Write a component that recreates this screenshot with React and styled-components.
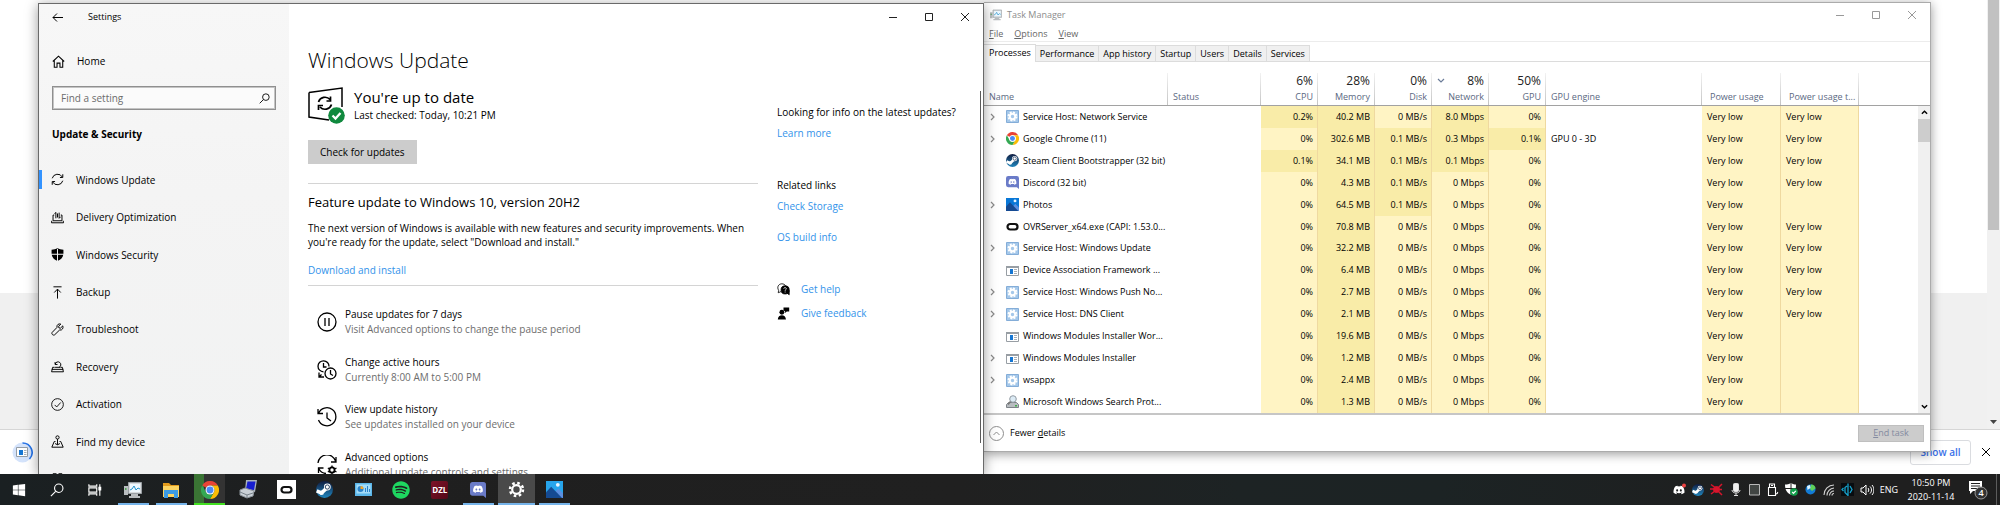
import styled, { createGlobalStyle } from 'styled-components';
import { FaWindows, FaDiscord, FaSpotify } from 'react-icons/fa';

// ── Global ─────────────────────────────────────────────────
const GlobalStyle = createGlobalStyle`
  * { box-sizing: border-box; margin: 0; padding: 0; }
  body {
    font-family: 'Open Sans', 'Noto Sans', sans-serif;
    font-size: 10px;
    line-height: 14px;
    color: #000;
    overflow: hidden;
  }
  button, input { font: inherit; color: inherit; border: 0; background: none; }
  a { color: #3393ea; text-decoration: none; }
  ul { list-style: none; }
  svg { display: block; flex: none; }
`;

const Desktop = styled.div`
  position: relative;
  display: flex;
  flex-direction: column;
  height: 100vh;
  background: #fff;
  overflow: hidden;
`;

// ── Browser behind the windows ─────────────────────────────
const Browser = styled.div`
  flex: 1;
  display: flex;
  flex-direction: column;
`;

const BrowserPage = styled.div`
  flex: 1;
  display: flex;
  background: #f0f0f0;
`;

const BrowserSheet = styled.div`
  flex: 1;
  height: 293px;
  background: #fff;
`;

const BrowserScroll = styled.div`
  width: 13px;
  padding: 0 1px 4px;
  display: flex;
  flex-direction: column;
  justify-content: space-between;
  align-items: center;
  background: #f1f1f1;
`;

const BrowserThumb = styled.div`
  width: 11px;
  height: 230px;
  background: #c1c1c1;
`;

const DownloadBar = styled.div`
  height: 45px;
  padding: 0 9px 0 12px;
  display: flex;
  align-items: center;
  gap: 10px;
  border-top: 1px solid #d6d6d6;
`;

const ShowAll = styled.button`
  width: 61px;
  height: 25px;
  margin-left: auto;
  border: 1px solid #dadce0;
  border-radius: 3px;
  font-weight: 600;
  color: #3b71e8;
`;

const PlainButton = styled.button`
  display: flex;
  align-items: center;
  justify-content: center;
`;

// ── Window layer ───────────────────────────────────────────
const Windows = styled.div`
  position: absolute;
  inset: 0 0 31px;
  display: grid;
  grid-template-columns: minmax(0, 946fr) minmax(0, 947fr);
  align-items: start;
  padding: 2px 69px 0 38px;
  overflow: hidden;
`;

const SettingsWindow = styled.section`
  position: relative;
  z-index: 1;
  display: flex;
  height: calc(100vh - 34px);
  margin-top: 1px;
  border: 1px solid #6a6a6a;
  border-bottom: 0;
  background: #fff;
  box-shadow: 0 2px 12px rgba(0, 0, 0, 0.4);
  overflow: hidden;
`;

const Sidebar = styled.aside`
  width: 250px;
  flex: none;
  padding: 0 13px;
  background: linear-gradient(#f7f7f7, #f4f4f4 40%, #f1f2f2);
`;

const SettingsTitle = styled.header`
  display: flex;
  align-items: center;
  gap: 25px;
  height: 26px;
  font-size: 9px;
`;

const HomeLink = styled.a`
  display: flex;
  align-items: center;
  gap: 12px;
  height: 26px;
  margin-top: 18px;
  color: #000;
`;

const SearchBox = styled.label`
  display: flex;
  align-items: center;
  height: 24px;
  margin: 12px 0 14px;
  padding: 0 5px 0 8px;
  border: 1px solid #8f8f8f;
  outline: 1px solid #c4c4c4;
  outline-offset: -2px;
  background: #fbfbfb;
`;

const SearchInput = styled.input`
  flex: 1;
  min-width: 0;
  outline: 0;
  &::placeholder { color: #6c6c6c; opacity: 1; }
`;

const SideHeading = styled.h2`
  font-size: 10px;
  line-height: 20px;
  font-weight: 700;
`;

const Nav = styled.nav`
  display: grid;
  grid-auto-rows: 1fr;
  height: 337px;
  margin: 17px -13px 0;
`;

const NavItem = styled.a`
  display: flex;
  align-items: center;
  gap: 12px;
  padding-left: 12px;
  color: #000;
  background: ${(p) =>
    p.$active ? 'linear-gradient(#3393ff, #3393ff) 0 center / 3px 19px no-repeat' : 'none'};
`;

const Content = styled.div`
  flex: 1;
  min-width: 0;
  display: flex;
  flex-direction: column;
`;

const WindowButtons = styled.div`
  display: flex;
  flex: none;
  justify-content: flex-end;
  height: ${(p) => p.$height};
  margin-left: auto;
  color: ${(p) => p.$color};
`;

const WindowButton = styled(PlainButton)`
  width: 36px;
`;

const ContentBody = styled.div`
  display: grid;
  grid-template-columns: minmax(0, 450px) minmax(0, 1fr);
  gap: 19px;
  padding: 0 12px 0 19px;
`;

const Main = styled.main`
  padding-top: 16px;
`;

const PageTitle = styled.h1`
  font-size: 21px;
  line-height: 28px;
  font-weight: 300;
`;

const StatusRow = styled.div`
  display: flex;
  gap: 9px;
  margin-top: 13px;
`;

const StatusTitle = styled.h2`
  font-size: 15px;
  line-height: 21px;
  font-weight: 400;
`;

const CheckButton = styled.button`
  height: 24px;
  margin-top: 16px;
  padding: 0 12px;
  background: #ccc;
`;

const Divider = styled.hr`
  border: 0;
  border-top: 1px solid #d4d4d4;
  margin-top: ${(p) => p.$top};
`;

const FeatureTitle = styled.h3`
  margin: 8px 0 9px;
  font-size: 13px;
  line-height: 20px;
  font-weight: 400;
`;

const InstallLink = styled.a`
  display: block;
  margin-top: 14px;
`;

const Options = styled.ul`
  display: grid;
  grid-auto-rows: 1fr;
  height: 191px;
  margin: 12px 0 0 9px;
`;

const Option = styled.li`
  display: flex;
  align-items: center;
  gap: 8px;
  line-height: 15px;
`;

const OptionHint = styled.p`
  color: #6d6d6d;
`;

const Links = styled.div`
  padding-top: 75px;
  display: flex;
  flex-direction: column;
  align-items: flex-start;
  white-space: nowrap;
`;

const LinkGroup = styled.div`
  display: flex;
  flex-direction: column;
  gap: ${(p) => p.$gap};
  margin-bottom: ${(p) => p.$after};
`;

const IconLink = styled.a`
  display: flex;
  align-items: center;
  gap: 11px;
  svg { color: #000; }
`;

const ScrollMark = styled.div`
  position: absolute;
  top: 87px;
  right: 2px;
  bottom: 31px;
  width: 1px;
  background: #5a5a5a;
`;

// ── Task manager ───────────────────────────────────────────
const TaskWindow = styled.section`
  border: 1px solid #ababab;
  border-left: 0;
  background: #fff;
  font-size: 9px;
  box-shadow: 0 2px 10px rgba(0, 0, 0, 0.4);
`;

const TaskTitle = styled.header`
  display: flex;
  align-items: center;
  gap: 5px;
  height: 24px;
  padding-left: 6px;
  color: #8c8c8c;
`;

const Menu = styled.div`
  display: flex;
  gap: 11px;
  height: 15px;
  padding-left: 5px;
  border-bottom: 1px solid #ececec;
  color: #666;
`;

const Tabs = styled.div`
  display: flex;
  align-items: flex-end;
  height: 20px;
  border-bottom: 1px solid #dcdcdc;
`;

const Tab = styled.button`
  height: ${(p) => (p.$active ? '18px' : '16px')};
  padding: ${(p) => (p.$active ? '0 4px 2px 5px' : '0 4px')};
  border: solid #dcdcdc;
  border-width: 1px 1px 0 0;
  background: ${(p) => (p.$active ? '#fff' : '#f0f0f0')};
  margin-bottom: ${(p) => (p.$active ? '-1px' : '0')};
`;

const TableArea = styled.div`
  display: flex;
  border-bottom: 2px solid #c6c6c6;
`;

const Table = styled.table`
  flex: 1;
  width: 100%;
  min-width: 0;
  height: 351px;
  table-layout: fixed;
  border-collapse: separate;
  border-spacing: 0;
  white-space: nowrap;
`;

const Col = styled.col`
  width: ${(p) => p.$width};
`;

const HeadCell = styled.th`
  height: 44px;
  padding: 0 5px 0 ${(p) => (p.$inset ? '8px' : '5px')};
  border-bottom: 1px solid #a2a2a2;
  background: ${(p) =>
    p.$line ? 'linear-gradient(#f2f2f2, #c4c4c4) right bottom / 1px 32px no-repeat' : 'none'};
  color: #5a6882;
  font-weight: 400;
  line-height: 16px;
  text-align: ${(p) => (p.$num ? 'right' : 'left')};
  vertical-align: bottom;
`;

const Total = styled.div`
  display: flex;
  justify-content: flex-end;
  align-items: center;
  font-size: 12px;
  color: #222;
  svg { margin-right: auto; color: #6b7c99; }
`;

const Cell = styled.td`
  padding: 0 4px 0 5px;
  overflow: hidden;
  line-height: 14px;
  text-align: ${(p) => (p.$num ? 'right' : 'left')};
  background: ${(p) => ({ low: '#fff4c4', mid: '#f9eca8' })[p.$heat] || 'none'};
  border-right: ${(p) => (p.$heat ? '1px solid #efd9a0' : '0')};
`;

const NameBox = styled.div`
  display: flex;
  align-items: center;
  gap: 4px;
`;

const Expander = styled.span`
  flex: none;
  width: 13px;
  height: 8px;
  color: #8a8a8a;
`;

const TableScroll = styled.div`
  width: 12px;
  flex: none;
  display: flex;
  flex-direction: column;
  align-items: center;
  background: #f0f0f0;
`;

const ScrollHead = styled.div`
  width: 12px;
  height: 44px;
  border-bottom: 1px solid #a2a2a2;
  background: #fff;
`;

const ScrollThumb = styled.div`
  width: 12px;
  height: 23px;
  margin-bottom: auto;
  background: #cdcdcd;
`;

const ScrollArrow = styled(PlainButton)`
  height: 13px;
`;

const TaskFooter = styled.footer`
  display: flex;
  align-items: center;
  justify-content: space-between;
  height: 36px;
  padding: 0 6px 0 5px;
`;

const FewerButton = styled(PlainButton)`
  gap: 6px;
`;

const EndButton = styled.button`
  width: 66px;
  height: 17px;
  border: 1px solid #bfbfbf;
  background: #ccc;
  color: #838aa0;
`;

// ── Taskbar ────────────────────────────────────────────────
const Taskbar = styled.footer`
  display: flex;
  height: 31px;
  background: linear-gradient(90deg, #1a2022, #1f1f1f 18%, #202020 48%, #1d2324 62%, #1c2324 72%, #1f1f1f 90%);
  color: #fff;
`;

const SystemApps = styled.div`
  display: grid;
  grid-template-columns: repeat(3, 38px);
`;

const PinnedApps = styled.div`
  display: grid;
  grid-template-columns: repeat(12, 1fr);
  width: 460px;
`;

const stateFill = {
  active: '#4a4a4a',
  progress: 'linear-gradient(90deg, #3a7434 10px, #333 10px)',
};

const AppButton = styled(PlainButton)`
  justify-self: center;
  width: ${(p) => (p.$state === 'active' ? '37px' : '31px')};
  background: ${(p) => stateFill[p.$state] || 'none'};
  box-shadow: ${(p) =>
    p.$state ? `inset 0 -2px ${p.$state === 'progress' ? '#42e020' : '#76b4ea'}` : 'none'};
`;

const OculusTile = styled.span`
  display: flex;
  align-items: center;
  justify-content: center;
  width: 19px;
  height: 19px;
  background: #fff;
`;

const DzlTile = styled.span`
  width: 17px;
  height: 18px;
  border-radius: 2px;
  background: linear-gradient(135deg, #7d1228, #540818);
  font-size: 8px;
  line-height: 18px;
  font-weight: 700;
`;

const Tray = styled.div`
  display: flex;
  align-items: center;
  margin-left: auto;
  font-size: 9px;
`;

const TrayIcons = styled.div`
  display: grid;
  grid-template-columns: repeat(11, 1fr);
  justify-items: center;
  align-items: center;
  width: 206px;
`;

const Language = styled.button`
  width: 26px;
`;

const Clock = styled.time`
  width: 58px;
  text-align: center;
`;

const Notices = styled(PlainButton)`
  width: 36px;
`;

const ShowDesktop = styled.div`
  width: 4px;
  height: 31px;
  border-left: 1px solid #5c5c5c;
`;

// ── Icons ──────────────────────────────────────────────────
const Line = ({ size = 13, w = 1, vb = 16, children }) => (
  <svg width={size} height={size} viewBox={`0 0 ${vb} ${vb}`} fill="none" stroke="currentColor" strokeWidth={w}>
    {children}
  </svg>
);

const MinIcon = () => <Line size={10} vb={10}><path d="M1 5.500h8" /></Line>;
const MaxIcon = () => <Line size={10} vb={10}><path d="M1.500 1.500h7v7h-7z" /></Line>;
const CloseIcon = () => <Line size={10} vb={10}><path d="M1 1l8 8M9 1L1 9" /></Line>;
const BackIcon = () => <Line size={11} vb={11}><path d="M1 5.500h10M5 1.500l-4 4 4 4" /></Line>;
const HomeIcon = () => (
  <Line w={1.3}><path d="M1 8l7-6.500 7 6.500M2.800 6.500V15h3.400v-5h3.600v5h3.400V6.500" /></Line>
);
const SearchIcon = ({ size = 11 }) => (
  <Line size={size} w={1.3}><circle cx="10" cy="6" r="4.800" /><path d="M6.500 9.500L1 15" /></Line>
);
const SyncIcon = () => (
  <Line w={1.2}>
    <path d="M1.500 6.500A6.800 6.800 0 0 1 14 5M14.500 1.500v4H11M14.500 9.500A6.800 6.800 0 0 1 2 11M1.500 14.500v-4H5" />
  </Line>
);
const DeliveryIcon = () => (
  <Line w={1.2}><path d="M4 5H2.500v7h11V5H12M1 12l-.4 2.500h14.800L15 12M6 9V2M4.500 3.500L6 1.500M10 2v7M8 3v5M10 9l2-2" /></Line>
);
const ShieldIcon = () => (
  <Line w={0}>
    <path fill="currentColor" d="M8 0c2 1.500 4.500 2 7.300 2v5H8.600V1H7.400v6H.7V2C3.500 2 6 1.500 8 0zM.9 8.200h6.500v7.500C4 14 1.500 12 .9 8.200zM8.600 8.200h6.500C14.500 12 12 14 8.600 15.700z" />
  </Line>
);
const BackupIcon = () => <Line w={1.2}><path d="M3 1h10M8 15.500V4M4 8l4-4.200L12 8" /></Line>;
const WrenchIcon = () => (
  <Line w={1.2}><path d="M14.500 3.500l-2.800 2.800-2-.3-.3-2 2.700-2.700C9.500.5 6.800 2 7.300 5.500L1.500 11.500c-1.500 1.500 1 4.500 3 3L10.500 8.700c3.500.6 5-2.500 4-5.200z" /></Line>
);
const RecoveryIcon = () => (
  <Line w={1.2}><path d="M4.500 9H2L.7 14.500h14.600L14 9h-2.500M5 9h6M5 2.500v3h3M5.200 5A3.500 3.500 0 1 1 10 9M1 11.500h14" /></Line>
);
const ActivationIcon = () => <Line w={1.1}><circle cx="8" cy="8" r="7.200" /><path d="M4.500 8.500L7 11l5-5.500" /></Line>;
const FindIcon = () => (
  <Line w={1.2}><circle cx="8" cy="3" r="2" /><path d="M8 5v7M5.500 8H4L1 15h14l-3-7h-1.500M5 10.500l3 1.500 3-1.500" /></Line>
);
const DeveloperIcon = () => <Line w={1.5}><path d="M3 15V1h3v4M13 15V1h-3v4M3 8h10" /></Line>;

const UpdateStatusIcon = () => (
  <svg width="37" height="37" viewBox="0 0 37 37" fill="none" stroke="#000">
    <path strokeWidth="1.500" d="M1 5.500L34 1v19M1 5.500V30l20 3" />
    <g transform="translate(9 8.500)" strokeWidth="1.700">
      <path d="M1.500 6.500A6.800 6.800 0 0 1 13 4M13.500 1v4.500H9.500M14.500 9A6.800 6.800 0 0 1 3 11.500M1.500 14.500v-4.500H6" />
    </g>
    <circle cx="28.500" cy="28.500" r="8.300" fill="#10893e" stroke="none" />
    <path stroke="#fff" strokeWidth="2.300" d="M24.500 28.500l3 3 5-5.500" />
  </svg>
);
const PauseIcon = () => <Line size={20} vb={20} w={1.3}><circle cx="10" cy="10" r="9" /><path d="M8 6v8M12 6v8" /></Line>;
const HoursIcon = () => (
  <Line size={20} vb={20} w={1.3}>
    <circle cx="13.500" cy="13.500" r="5.500" />
    <path d="M13.500 10v4l2.500 1.500M6.500 11.800A5.500 5.500 0 1 1 12 6.500M6.500 3v4h3M2 12.500v4.500h5M4.500 14.500L2 17" />
  </Line>
);
const HistoryIcon = () => (
  <Line size={20} vb={20} w={1.3}><path d="M1.500 6.500A9 9 0 1 1 1.500 13M1 2v4.500h5M10 5.500V11l4 3" /></Line>
);
const AdvancedIcon = () => (
  <Line size={20} vb={20} w={1.3}>
    <path d="M1 8A9 9 0 0 1 18.500 6M19 2v5h-5M9 18.500A8.500 8.500 0 0 1 2 14M1.500 18v-5h5" />
    <circle cx="15" cy="15" r="2.600" strokeWidth="1.800" />
    <path d="M15 10.500v2M15 17.500v2M10.800 13l2 1M17.500 16l2 1M10.800 17l2-1M17.500 14l2-1" />
  </Line>
);
const HelpIcon = () => (
  <Line size={13}>
    <path d="M5 10.500L1.500 12 2 9C-.5 5 2 1 6 1c2 0 4 1 4.500 2.500" />
    <circle cx="10" cy="8.500" r="5" fill="currentColor" /><path fill="currentColor" d="M12 12l3 2.500V9" />
    <path stroke="#fff" d="M8.300 7c.3-2 3.500-1.500 3.200.3-.2 1-1.500.8-1.500 2.200M10 10.500v1.200" />
  </Line>
);
const FeedbackIcon = () => (
  <Line size={13} w={0}>
    <g fill="currentColor"><circle cx="6" cy="6.500" r="3" /><path d="M1 15.500c0-7 10-7 10 0zM8 .5h7v5h-3L10 7.500V5.500L8 4z" /></g>
  </Line>
);

const Chrome = ({ size }) => (
  <svg width={size} height={size} viewBox="0 0 24 24">
    <path fill="#e94335" d="M1.600 6A12 12 0 0 1 22.400 6H12a6 6 0 0 0-5.200 3z" />
    <path fill="#fbbc05" d="M22.400 6A12 12 0 0 1 12 24l5.200-9A6 6 0 0 0 12 6z" />
    <path fill="#34a853" d="M12 24A12 12 0 0 1 1.600 6l5.200 9a6 6 0 0 0 10.400 0z" />
    <circle cx="12" cy="12" r="6" fill="#fff" /><circle cx="12" cy="12" r="4.600" fill="#4a8af4" />
  </svg>
);
const Steam = ({ size }) => (
  <svg width={size} height={size} viewBox="0 0 24 24">
    <linearGradient id="steam" x2="0" y2="1"><stop stopColor="#101c40" /><stop offset="1" stopColor="#2086bd" /></linearGradient>
    <circle cx="12" cy="12" r="12" fill="url(#steam)" />
    <path stroke="#fff" strokeWidth="5" d="M1 14l7 3M9 16l7-7" /><circle cx="16" cy="8.500" r="4.800" fill="#fff" />
    <circle cx="16" cy="8.500" r="3" fill="none" stroke="#1a3155" strokeWidth="1.300" /><circle cx="8" cy="16.500" r="3.200" fill="#fff" />
  </svg>
);
const DiscordTile = ({ size }) => (
  <svg width={size} height={size} viewBox="0 0 18 18">
    <path fill="#6a7bc8" d="M3 0h12a3 3 0 0 1 3 3v15l-3-2.500H3a3 3 0 0 1-3-3V3a3 3 0 0 1 3-3z" />
    <FaDiscord x="3" y="2" size={12} color="#fff" />
  </svg>
);
const ServiceIcon = () => (
  <svg width="13" height="13" viewBox="0 0 13 13">
    <path fill="#a5c8ea" stroke="#84add8" d="M.5.5h12v12H.5z" />
    <circle cx="6.500" cy="6.500" r="4" fill="none" stroke="#fff" strokeWidth="2" strokeDasharray="1.900 1.240" />
    <circle cx="6.500" cy="6.500" r="2.700" fill="none" stroke="#fff" strokeWidth="2" />
  </svg>
);
const ExeIcon = () => (
  <svg width="13" height="13" viewBox="0 0 13 13">
    <path fill="#fff" stroke="#989ea4" d="M.5 2.500h12v9H.5z" /><path fill="#989ea4" d="M0 2h13v2H0z" />
    <path fill="#1676d2" d="M4 5h3v5H4z" /><path stroke="#a9b0b8" d="M8 5.500h3M8 7.500h3M8 9.500h3" />
  </svg>
);
const PhotosIcon = ({ size }) => (
  <svg width={size} height={size} viewBox="0 0 18 18">
    <path fill={size > 14 ? '#27a5ec' : '#0877d7'} d="M0 0h18v18H0z" />
    <path fill="#5b8fe0" d="M9 12l4-4 5 5v5H9z" /><path fill="#154a92" d="M0 12l5.500-6L17 18H0z" /><circle cx="12.500" cy="4" r="2" fill="#eaf6ff" />
  </svg>
);
const OculusIcon = () => (
  <svg width="13" height="13" viewBox="0 0 13 13"><rect x="1.500" y="4" width="10" height="5.500" rx="2.700" fill="none" stroke="#111" strokeWidth="2.200" /></svg>
);
const SearchHostIcon = () => (
  <svg width="13" height="13" viewBox="0 0 13 13">
    <path fill="#b8bcc0" stroke="#7d8388" d="M2.500 7.500h8l2 2v3H.5v-3z" /><circle cx="7" cy="4" r="3.300" fill="#dcebf5" stroke="#929aa2" />
    <path stroke="#777" strokeWidth="1.500" d="M4.500 6.500L2 9.500" /><path fill="#3fae49" d="M9 10h2v1.500H9z" />
  </svg>
);
const TaskMgrIcon = ({ size }) => (
  <svg width={size} height={size} viewBox="0 0 18 18">
    <path fill="#d6dadd" stroke="#9aa0a5" d="M4.500 1.500h13v11h-13z" /><path fill="#eef8fe" d="M6 3h10v8H6z" />
    <path fill="none" stroke="#2492cc" d="M6 9l2-1 2-3 2 4 2-2 2 1" /><path fill="#b9bdc0" d="M0 5h4v9H0zM7 13h7v2h2v2H5v-2h2z" /><path fill="#53a657" d="M1 7h1.500v2H1z" />
  </svg>
);
const FolderIcon = () => (
  <svg width="18" height="18" viewBox="0 0 18 18">
    <path fill="#e39b1c" d="M1 2h6l2 2h8v12H1z" /><path fill="#fcd462" d="M1 5h16v11H1z" /><path fill="#3d9be3" d="M2 9h14v8h-4v-4H6v4H2z" />
  </svg>
);
const PcIcon = () => (
  <svg width="19" height="19" viewBox="0 0 19 19">
    <path fill="#aab3bc" d="M7 0h11l-2 12-10-1z" /><path fill="#171ed0" d="M8.500 1.500h8l-1.500 8.500-8-1z" />
    <path fill="#c9d0d6" stroke="#8a9299" d="M1 10l5-2 9 3-1 5-6 2-7-3z" /><path fill="none" stroke="#78828a" d="M1 12l7 3 6-2M8 15v3" />
  </svg>
);
const PanelIcon = () => (
  <svg width="17" height="13" viewBox="0 0 17 13">
    <path fill="#5cb7ea" d="M0 0h17v13H0z" /><path fill="#a5dcf8" d="M1.500 1.500h14v9h-14z" />
    <circle cx="5.500" cy="6" r="3" fill="#2b82c9" /><path fill="#f4a72c" d="M5.500 6V3a3 3 0 0 1 3 3z" /><path stroke="#2b82c9" d="M10.500 9V5M12.500 9V3M14.500 9V6" />
  </svg>
);
const TaskViewIcon = () => (
  <Line size={14} w={1.3}><path d="M1 1.500v2h9v-2M1 14.500v-2h9v2M1 5.500h9v5H1zM13.500 1.500v13M12.500 5h2v3h-2z" /></Line>
);
const GearIcon = () => (
  <svg width="17" height="17" viewBox="0 0 17 17" fill="none" stroke="#fff">
    <circle cx="8.500" cy="8.500" r="4.300" strokeWidth="2.200" /><circle cx="8.500" cy="8.500" r="6.500" strokeWidth="2.500" strokeDasharray="2.550 2.550" />
  </svg>
);
const DownloadIcon = () => (
  <svg width="21" height="21" viewBox="0 0 21 21">
    <circle cx="10.500" cy="10.500" r="10" fill="#d4e3fb" /><path fill="none" stroke="#2673e8" strokeWidth="1.600" d="M10.500 1a9.500 9.500 0 0 1 7 16" />
    <path fill="#fff" stroke="#959da5" d="M4.500 5.500h11v9h-11z" /><path fill="#1676d2" d="M7 8h4v5H7z" /><path stroke="#a9b0b8" d="M12 8.500h2.500M12 10.500h2.500M12 12.500h2.500" />
  </svg>
);
const Chevron = ({ d, size = 8, w = 1.2 }) => <Line size={size} vb={8} w={w}><path d={d} /></Line>;

// ── Tray icons ─────────────────────────────────────────────
const TrayDiscord = () => (
  <svg width="13" height="13" viewBox="0 0 13 13"><FaDiscord x="0" y="1" size={12} color="#fff" /><circle cx="11" cy="2.500" r="2" fill="#ee4343" /></svg>
);
const TrayRed = () => (
  <svg width="13" height="13" viewBox="0 0 13 13" stroke="#d8152c" fill="#d8152c">
    <circle cx="6.500" cy="6.500" r="3" /><path strokeWidth="1.500" d="M1 1.500l4 3M12 1l-4 4M1 11l4-3M12 12L8 8M0 6h4M9 6.500h3" />
  </svg>
);
const TrayMic = () => (
  <svg width="12" height="13" viewBox="0 0 12 13" stroke="#ddd" fill="none"><rect x="3.500" y=".5" width="5" height="8" rx="1" fill="#eee" /><path d="M2 7c0 4 8 4 8 0M6 10v3M4 12.500h4" /></svg>
);
const TrayBox = () => (
  <svg width="11" height="12" viewBox="0 0 11 12"><path fill="#414543" stroke="#b8b8b8" d="M.5.5h10v10.500H.5z" /></svg>
);
const TrayUsb = () => <Line size={13} vb={13} w={1.1}><path d="M3.500 4V1h5v3M2.500 4.500h7v8h-7zM5 2.500h2M10 11c1 0 2-1 1.500-2" /></Line>;
const TrayShield = () => (
  <svg width="13" height="13" viewBox="0 0 13 13">
    <path fill="#fff" d="M6 0c2 1.500 3.500 1.500 5 1.500 0 6-1 8-5 10.500C2 9.500 0 7.500 0 1.500 2 1.500 4 1.500 6 0z" /><path stroke="#202020" d="M6 0v12M0 5.500h12" />
    <circle cx="9" cy="9" r="3.800" fill="#13a04b" /><path fill="none" stroke="#fff" strokeWidth="1.200" d="M7.200 9l1.300 1.300 2.300-2.500" />
  </svg>
);
const TrayBall = () => (
  <svg width="11" height="11" viewBox="0 0 11 11"><circle cx="5.500" cy="5.500" r="5" fill="#137bd4" /><path fill="#5dd15a" d="M6 .5c3 0 4.500 2 4.500 4L7 7 5 5z" /><path fill="#dff5ff" d="M2 2l3-1 .5 3-3 2z" /></svg>
);
const TrayWifi = () => (
  <Line size={12} vb={12} w={1.1}>
    <path opacity=".8" d="M1 11A10 10 0 0 1 11 1M4 11.500A7.500 7.500 0 0 1 11 4M6.500 11.500A4.500 4.500 0 0 1 11 7M9 11.500A2 2 0 0 1 11 9.500" />
  </Line>
);
const TrayDiamond = () => (
  <svg width="13" height="13" viewBox="0 0 13 13"><path fill="#080c10" d="M0 0h13v13H0z" /><path fill="none" stroke="#16a3ce" strokeWidth="1.300" d="M7 .5v12L4 9.500v-5L6 3M9 3l2 3.500L9 10M2.500 5L1 6.500 2.500 8" /></svg>
);
const TrayVolume = () => <Line size={14} vb={14}><path d="M1 5h2l3-3v10L3 9H1zM8 5c1 1 1 3 0 4M10 3.500c2 2 2 5 0 7M12 2c2.500 3 2.500 7 0 10" /></Line>;
const NoticeIcon = () => (
  <svg width="20" height="20" viewBox="0 0 20 20">
    <path fill="#fff" d="M1 1h13v10H5l-3 3v-3H1z" /><path stroke="#222" d="M3 3.500h9M3 6h9M3 8.500h6" />
    <circle cx="13" cy="13" r="6" fill="#333" stroke="#999" />
    <text x="13" y="16" textAnchor="middle" fontSize="9" fontWeight="600" fill="#fff">4</text>
  </svg>
);

// ── Data ───────────────────────────────────────────────────
const navItems = [
  ['Windows Update', SyncIcon],
  ['Delivery Optimization', DeliveryIcon],
  ['Windows Security', ShieldIcon],
  ['Backup', BackupIcon],
  ['Troubleshoot', WrenchIcon],
  ['Recovery', RecoveryIcon],
  ['Activation', ActivationIcon],
  ['Find my device', FindIcon],
];

const options = [
  ['Pause updates for 7 days', 'Visit Advanced options to change the pause period', PauseIcon],
  ['Change active hours', 'Currently 8:00 AM to 5:00 PM', HoursIcon],
  ['View update history', 'See updates installed on your device', HistoryIcon],
  ['Advanced options', 'Additional update controls and settings', AdvancedIcon],
];

const tabs = ['Processes', 'Performance', 'App history', 'Startup', 'Users', 'Details', 'Services'];

const colWidths = ['184px', '93px', '57px', '57px', '57px', '57px', '57px', '156px', '79px', '78px', 'auto'];

const low = 'Very low';
const processes = [
  { name: 'Service Host: Network Service', icon: <ServiceIcon />, open: true, cpu: '0.2%', mem: '40.2', net: '8.0', trend: low },
  { name: 'Google Chrome (11)', icon: <Chrome size={13} />, open: true, mem: '302.6', disk: '0.1', net: '0.3', gpu: '0.1%', engine: 'GPU 0 - 3D', trend: low },
  { name: 'Steam Client Bootstrapper (32 bit)', icon: <Steam size={13} />, cpu: '0.1%', mem: '34.1', disk: '0.1', net: '0.1', trend: low },
  { name: 'Discord (32 bit)', icon: <DiscordTile size={13} />, mem: '4.3', disk: '0.1', trend: low },
  { name: 'Photos', icon: <PhotosIcon size={13} />, open: true, mem: '64.5', disk: '0.1' },
  { name: 'OVRServer_x64.exe (CAPI: 1.53.0...', icon: <OculusIcon />, mem: '70.8', trend: low },
  { name: 'Service Host: Windows Update', icon: <ServiceIcon />, open: true, mem: '32.2', trend: low },
  { name: 'Device Association Framework ...', icon: <ExeIcon />, mem: '6.4', trend: low },
  { name: 'Service Host: Windows Push No...', icon: <ServiceIcon />, open: true, mem: '2.7', trend: low },
  { name: 'Service Host: DNS Client', icon: <ServiceIcon />, open: true, mem: '2.1', trend: low },
  { name: 'Windows Modules Installer Wor...', icon: <ExeIcon />, mem: '19.6' },
  { name: 'Windows Modules Installer', icon: <ExeIcon />, open: true, mem: '1.2' },
  { name: 'wsappx', icon: <ServiceIcon />, open: true, mem: '2.4' },
  { name: 'Microsoft Windows Search Prot...', icon: <SearchHostIcon />, mem: '1.3' },
];

const totals = [['6%', 'CPU'], ['28%', 'Memory'], ['0%', 'Disk'], ['8%', 'Network'], ['50%', 'GPU']];

const apps = [
  ['Task Manager', <TaskMgrIcon size={18} />, 'open'],
  ['File Explorer', <FolderIcon />, 'open'],
  ['Google Chrome', <Chrome size={18} />, 'progress'],
  ['Remote PC', <PcIcon />],
  ['Oculus', <OculusTile><OculusIcon /></OculusTile>],
  ['Steam', <Steam size={17} />],
  ['Control Panel', <PanelIcon />],
  ['Spotify', <FaSpotify size={18} color="#1ed760" />],
  ['DZL', <DzlTile>DZL</DzlTile>],
  ['Discord', <DiscordTile size={16} />, 'open'],
  ['Settings', <GearIcon />, 'active'],
  ['Photos', <PhotosIcon size={17} />, 'open'],
];

const heat = (value) => (parseFloat(value) > 0 ? 'mid' : 'low');

// ── Components ─────────────────────────────────────────────
function WindowControls({ height, color }) {
  return (
    <WindowButtons $height={height} $color={color}>
      <WindowButton aria-label="Minimize"><MinIcon /></WindowButton>
      <WindowButton aria-label="Maximize"><MaxIcon /></WindowButton>
      <WindowButton aria-label="Close"><CloseIcon /></WindowButton>
    </WindowButtons>
  );
}

function Settings() {
  return (
    <SettingsWindow>
      <Sidebar>
        <SettingsTitle>
          <PlainButton aria-label="Back"><BackIcon /></PlainButton>
          Settings
        </SettingsTitle>
        <HomeLink href="#home"><HomeIcon />Home</HomeLink>
        <SearchBox>
          <SearchInput aria-label="Find a setting" placeholder="Find a setting" />
          <SearchIcon />
        </SearchBox>
        <SideHeading>Update &amp; Security</SideHeading>
        <Nav>
          {navItems.map(([label, Icon], i) => (
            <NavItem key={label} href="#nav" $active={i === 0}><Icon />{label}</NavItem>
          ))}
          <NavItem href="#developers" aria-label="For developers"><DeveloperIcon /></NavItem>
        </Nav>
      </Sidebar>

      <Content>
        <WindowControls height="26px" color="#222" />
        <ContentBody>
          <Main>
            <PageTitle>Windows Update</PageTitle>
            <StatusRow>
              <UpdateStatusIcon />
              <div>
                <StatusTitle>You're up to date</StatusTitle>
                <p>Last checked: Today, 10:21 PM</p>
              </div>
            </StatusRow>
            <CheckButton>Check for updates</CheckButton>
            <Divider $top="19px" />
            <FeatureTitle>Feature update to Windows 10, version 20H2</FeatureTitle>
            <p>
              The next version of Windows is available with new features and security improvements. When
              you're ready for the update, select "Download and install."
            </p>
            <InstallLink href="#install">Download and install</InstallLink>
            <Divider $top="8px" />
            <Options>
              {options.map(([title, hint, Icon]) => (
                <Option key={title}>
                  <Icon />
                  <div>
                    <p>{title}</p>
                    <OptionHint>{hint}</OptionHint>
                  </div>
                </Option>
              ))}
            </Options>
          </Main>
          <Links>
            <LinkGroup $gap="7px" $after="38px">
              <p>Looking for info on the latest updates?</p>
              <a href="#learn">Learn more</a>
            </LinkGroup>
            <LinkGroup $gap="7px" $after="17px">
              <p>Related links</p>
              <a href="#storage">Check Storage</a>
            </LinkGroup>
            <LinkGroup $gap="0" $after="38px">
              <a href="#build">OS build info</a>
            </LinkGroup>
            <LinkGroup $gap="10px" $after="0">
              <IconLink href="#help"><HelpIcon />Get help</IconLink>
              <IconLink href="#feedback"><FeedbackIcon />Give feedback</IconLink>
            </LinkGroup>
          </Links>
        </ContentBody>
      </Content>
      <ScrollMark />
    </SettingsWindow>
  );
}

function ProcessRow({ p }) {
  const { cpu = '0%', mem, disk = '0', net = '0', gpu = '0%' } = p;
  return (
    <tr>
      <Cell>
        <NameBox>
          <Expander>{p.open && <Chevron d="M2 1l3 3-3 3" />}</Expander>
          {p.icon}
          {p.name}
        </NameBox>
      </Cell>
      <Cell />
      <Cell $num $heat={heat(cpu)}>{cpu}</Cell>
      <Cell $num $heat="mid">{mem} MB</Cell>
      <Cell $num $heat={heat(disk)}>{disk} MB/s</Cell>
      <Cell $num $heat={heat(net)}>{net} Mbps</Cell>
      <Cell $num $heat={heat(gpu)}>{gpu}</Cell>
      <Cell>{p.engine}</Cell>
      <Cell $heat="low">{low}</Cell>
      <Cell $heat="low">{p.trend}</Cell>
      <Cell />
    </tr>
  );
}

function TaskManager() {
  return (
    <TaskWindow>
      <TaskTitle>
        <TaskMgrIcon size={12} />
        Task Manager
        <WindowControls height="24px" color="#999" />
      </TaskTitle>
      <Menu>
        <button><u>F</u>ile</button>
        <button><u>O</u>ptions</button>
        <button><u>V</u>iew</button>
      </Menu>
      <Tabs>
        {tabs.map((t, i) => <Tab key={t} $active={i === 0}>{t}</Tab>)}
      </Tabs>
      <TableArea>
        <Table>
          <colgroup>
            {colWidths.map((w, i) => <Col key={i} $width={w} />)}
          </colgroup>
          <thead>
            <tr>
              <HeadCell $line>Name</HeadCell>
              <HeadCell $line>Status</HeadCell>
              {totals.map(([value, label]) => (
                <HeadCell key={label} $num $line>
                  <Total>
                    {label === 'Network' && <Chevron d="M1 2l3 3 3-3" />}
                    {value}
                  </Total>
                  {label}
                </HeadCell>
              ))}
              <HeadCell $line>GPU engine</HeadCell>
              <HeadCell $line $inset>Power usage</HeadCell>
              <HeadCell $line $inset>Power usage t...</HeadCell>
              <HeadCell />
            </tr>
          </thead>
          <tbody>
            {processes.map((p) => <ProcessRow key={p.name} p={p} />)}
          </tbody>
        </Table>
        <TableScroll>
          <ScrollHead />
          <ScrollArrow aria-label="Scroll up"><Chevron d="M1 5.500l3-3 3 3" w={1.6} size={7} /></ScrollArrow>
          <ScrollThumb />
          <ScrollArrow aria-label="Scroll down"><Chevron d="M1 2.500l3 3 3-3" w={1.6} size={7} /></ScrollArrow>
        </TableScroll>
      </TableArea>
      <TaskFooter>
        <FewerButton>
          <Line size={15} vb={15}><g stroke="#8e8e8e"><circle cx="7.500" cy="7.500" r="7" /><path d="M4.500 9l3-3 3 3" /></g></Line>
          <span>Fewer <u>d</u>etails</span>
        </FewerButton>
        <EndButton><u>E</u>nd task</EndButton>
      </TaskFooter>
    </TaskWindow>
  );
}

function App() {
  return (
    <Desktop>
      <GlobalStyle />
      <Browser>
        <BrowserPage>
          <BrowserSheet />
          <BrowserScroll>
            <BrowserThumb />
            <svg width="7" height="5" viewBox="0 0 7 5"><path fill="#444" d="M0 0h7L3.500 4z" /></svg>
          </BrowserScroll>
        </BrowserPage>
        <DownloadBar>
          <DownloadIcon />
          <ShowAll>Show all</ShowAll>
          <PlainButton aria-label="Close downloads"><CloseIcon /></PlainButton>
        </DownloadBar>
      </Browser>

      <Windows>
        <Settings />
        <TaskManager />
      </Windows>

      <Taskbar>
        <SystemApps>
          <AppButton aria-label="Start"><FaWindows size={14} /></AppButton>
          <AppButton aria-label="Search"><SearchIcon size={14} /></AppButton>
          <AppButton aria-label="Task view"><TaskViewIcon /></AppButton>
        </SystemApps>
        <PinnedApps>
          {apps.map(([label, icon, state]) => (
            <AppButton key={label} aria-label={label} $state={state}>{icon}</AppButton>
          ))}
        </PinnedApps>
        <Tray>
          <TrayIcons>
            <TrayDiscord />
            <Steam size={12} />
            <TrayRed />
            <TrayMic />
            <TrayBox />
            <TrayUsb />
            <TrayShield />
            <TrayBall />
            <TrayWifi />
            <TrayDiamond />
            <TrayVolume />
          </TrayIcons>
          <Language>ENG</Language>
          <Clock>10:50 PM<br />2020-11-14</Clock>
          <Notices aria-label="Notifications"><NoticeIcon /></Notices>
          <ShowDesktop />
        </Tray>
      </Taskbar>
    </Desktop>
  );
}

export default App;
